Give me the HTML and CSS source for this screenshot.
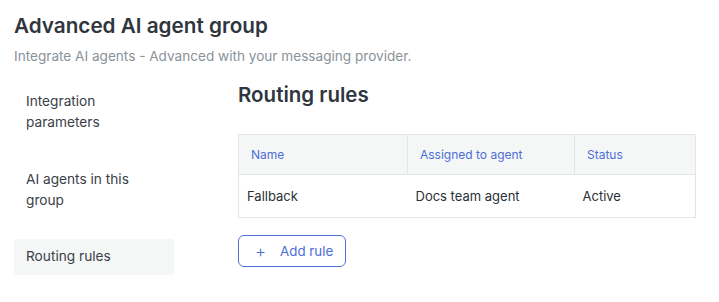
FILE: index.html
```html
<!DOCTYPE html>
<html lang="en">
<head>
<meta charset="utf-8">
<link rel="stylesheet" href="styles.css">
</head>
<body>
<header class="page-head">
  <h1 class="title">Advanced AI agent group</h1>
  <p class="subtitle">Integrate AI agents - Advanced with your messaging provider.</p>
</header>
<div class="layout">
  <nav class="sidenav">
    <a class="nav-item">Integration parameters</a>
    <a class="nav-item">AI agents in this group</a>
    <a class="nav-item active">Routing rules</a>
  </nav>
  <main class="content">
    <h2 class="section-title">Routing rules</h2>
    <table class="rules">
      <colgroup><col class="c1"><col class="c2"><col class="c3"></colgroup>
      <thead>
        <tr><th>Name</th><th>Assigned to agent</th><th>Status</th></tr>
      </thead>
      <tbody>
        <tr><td>Fallback</td><td>Docs team agent</td><td>Active</td></tr>
      </tbody>
    </table>
    <button class="add-btn" type="button"><span class="plus">+</span><span>Add rule</span></button>
  </main>
</div>
</body>
</html>
```

FILE: styles.css
```css
* { box-sizing: border-box; }
html, body { margin: 0; background: #fff; }
body {
  font-family: Inter, "Noto Sans", sans-serif;
  padding: 12px 24px 0 14px;
  color: #2f353b;
}
.title {
  margin: 0;
  font-size: 20.7px;
  line-height: 27px;
  font-weight: 600;
  color: #2f363d;
}
.subtitle {
  margin: 7px 0 0;
  font-size: 13.6px;
  line-height: 20px;
  color: #8a9299;
}
.layout {
  display: flex;
  gap: 64px;
  margin-top: 15px;
}
.sidenav {
  width: 160px;
  flex: none;
  display: flex;
  flex-direction: column;
  gap: 20px;
  padding-top: 2px;
}
.nav-item {
  display: block;
  padding: 8px 40px 8px 12px;
  font-size: 13.7px;
  line-height: 21px;
  color: #3a4047;
  border-radius: 4px;
}
.nav-item.active {
  background: #f5f7f7;
  padding-top: 7px;
  padding-bottom: 8px;
}
.content {
  flex: 1;
}
.section-title {
  margin: 0;
  font-size: 20.5px;
  line-height: 28px;
  font-weight: 600;
  color: #2f363d;
}
.rules {
  margin-top: 25px;
  width: 457px;
  border-collapse: collapse;
  table-layout: fixed;
  font-size: 13px;
}
.c1 { width: 169px; }
.c2 { width: 167px; }
.c3 { width: 121px; }
.rules th, .rules td {
  border: 1px solid #e3e6e8;
  text-align: left;
}
.rules th {
  background: #f5f7f7;
  font-weight: 400;
  font-size: 12px;
  color: #4d6ed8;
  height: 40px;
  padding: 0 12px;
}
.rules td {
  height: 43px;
  padding: 0 8px;
  color: #2b3036;
}
.rules tbody td { border-left: none; border-right: none; }
.rules tbody td:first-child { border-left: 1px solid #e3e6e8; }
.rules tbody td:last-child { border-right: 1px solid #e3e6e8; }
.add-btn {
  margin-top: 17px;
  display: inline-flex;
  align-items: center;
  gap: 14px;
  height: 32px;
  width: 108px;
  padding: 0 0 0 16px;
  border: 1px solid #4f6fdc;
  border-radius: 6px;
  background: #fff;
  color: #4d6ed8;
  font-family: inherit;
  font-size: 13.3px;
  line-height: 20px;
}
.plus {
  font-size: 17px;
  font-weight: 300;
  line-height: 1;
}
```
